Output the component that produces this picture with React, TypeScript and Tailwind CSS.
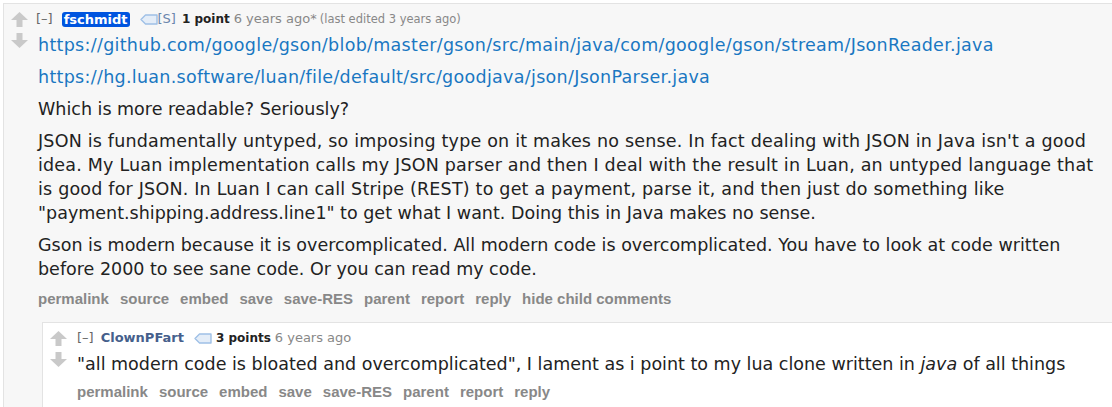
import React from "react";

function Arrow({ down = false }: { down?: boolean }) {
  return (
    <svg width="17" height="15" viewBox="0 0 17 15" className={down ? "rotate-180" : ""}>
      <path d="M8.5 0 L17 8 H11.5 V15 H5.5 V8 H0 Z" fill="#c9c9c9" />
    </svg>
  );
}

function Votes() {
  return (
    <div className="flex w-[34px] shrink-0 flex-col items-center gap-[6px] pr-[4px] pt-[8px]">
      <Arrow />
      <Arrow down />
    </div>
  );
}

function TagIcon() {
  return (
    <svg width="18" height="11" viewBox="0 0 18 11" className="inline-block align-[-1px]">
      <path d="M1 5.5 L5.5 1 H17 V10 H5.5 Z" fill="#e4edf8" stroke="#9fc0e6" strokeWidth="1.4" strokeLinejoin="round" />
    </svg>
  );
}

function Buttons({ items }: { items: string[] }) {
  return (
    <ul className="flex h-[20px] items-center gap-[11px] font-['Liberation_Sans',Arial,sans-serif] text-[15px] font-bold text-[#888]">
      {items.map((b) => (
        <li key={b}>{b}</li>
      ))}
    </ul>
  );
}

const linkCls = "text-[#1a77c2] tracking-[0.3px]";

export default function App() {
  return (
    <div className="h-[407px] w-[1112px] overflow-hidden bg-white pl-[3px] pt-[3px] font-['DejaVu_Sans',Verdana,sans-serif]">
      <div className="flex w-[1160px] border-l border-t border-[#e3e3e3] bg-[#f7f7f7]">
        <Votes />
        <div className="flex-1 pt-[7px]">
          <p className="-ml-[2px] flex h-[16px] items-center gap-[4px] whitespace-nowrap text-[13px] leading-[16px] text-[#888]">
            <span className="text-[#666]">[–]</span>
            <span className="ml-[5px] rounded-[3px] bg-[#0055df] px-[2px] font-bold leading-[15px] text-white">fschmidt</span>
            <span className="ml-[6px] flex items-center text-[#6a86ad]">
              <TagIcon />
              [S]
            </span>
            <span className="ml-[2px] text-[12px] font-bold text-[#222]">1 point</span>
            <span>6 years ago*</span>
            <span className="-ml-[1px] text-[11.5px]">(last edited 3 years ago)</span>
          </p>
          <div className="mt-[6px] pr-[60px] text-[17.5px] leading-[24px] text-[#222]">
            <p className="mb-[8px]">
              <a className={linkCls}>https://github.com/google/gson/blob/master/gson/src/main/java/com/google/gson/stream/JsonReader.java</a>
            </p>
            <p className="mb-[8px]">
              <a className={linkCls}>https://hg.luan.software/luan/file/default/src/goodjava/json/JsonParser.java</a>
            </p>
            <p className="mb-[8px]">Which is more readable? Seriously?</p>
            <p className="mb-[8px] whitespace-nowrap">
              <span className="tracking-[0.2px]">
                JSON is fundamentally untyped, so imposing type on it makes no sense. In fact dealing with JSON in Java isn't a good
                <br />
                idea. My Luan implementation calls my JSON parser and then I deal with the result in Luan, an untyped language that
                <br />
                is good for JSON. In Luan I can call Stripe (REST) to get a payment, parse it, and then just do something like
              </span>
              <br />
              "payment.shipping.address.line1" to get what I want. Doing this in Java makes no sense.
            </p>
            <p className="mb-[8px] whitespace-nowrap">
              Gson is modern because it is overcomplicated. All modern code is overcomplicated. You have to look at code written
              <br />
              before 2000 to see sane code. Or you can read my code.
            </p>
          </div>
          <Buttons items={["permalink", "source", "embed", "save", "save-RES", "parent", "report", "reply", "hide child comments"]} />

          <div className="ml-[4px] mt-[13px] flex h-[120px] border-l border-t border-[#e3e3e3] bg-white">
            <Votes />
            <div className="flex-1 pt-[7px]">
              <p className="flex h-[16px] items-center gap-[4px] whitespace-nowrap text-[13px] leading-[16px] text-[#888]">
                <span className="text-[#666]">[–]</span>
                <span className="ml-[3px] font-bold text-[#465f8c]">ClownPFart</span>
                <span className="ml-[6px] flex items-center">
                  <TagIcon />
                </span>
                <span className="text-[12px] font-bold text-[#222]">3 points</span>
                <span>6 years ago</span>
              </p>
              <p className="mb-[6px] mt-[6px] whitespace-nowrap text-[17.5px] leading-[24px] text-[#222]">
                "all modern code is bloated and overcomplicated", I lament as i point to my lua clone written in <em>java</em> of all things
              </p>
              <Buttons items={["permalink", "source", "embed", "save", "save-RES", "parent", "report", "reply"]} />
            </div>
          </div>
        </div>
      </div>
    </div>
  );
}
